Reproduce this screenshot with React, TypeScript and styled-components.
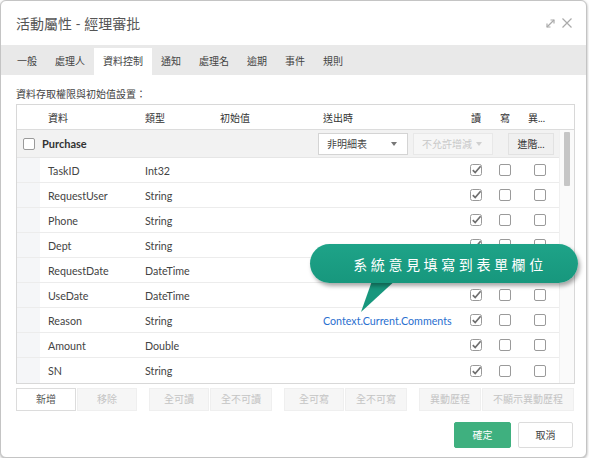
import * as React from "react";
import styled, { createGlobalStyle } from "styled-components";

const GlobalStyle = createGlobalStyle`
  html, body {
    margin: 0;
    padding: 0;
    background: #ffffff;
  }
  body {
    font-family: Lato, "Noto Sans CJK TC", sans-serif;
    font-size: 11px;
    color: #444;
  }
`;

const CJK = `Lato, "Noto Sans CJK TC", sans-serif`;

const Dialog = styled.div`
  position: relative;
  box-sizing: border-box;
  width: 587px;
  height: 458px;
  border: 1px solid #c4c4c4;
  border-radius: 6px;
  box-shadow: 0 1px 3px rgba(0, 0, 0, 0.35);
  background: #fff;
  overflow: hidden;
  display: flex;
  flex-direction: column;
`;

const TitleBar = styled.div`
  height: 44px;
  display: flex;
  align-items: center;
  justify-content: space-between;
  padding: 0 13px 0 15px;
`;

const Title = styled.div`
  font-family: ${CJK};
  font-size: 14px;
  color: #555;
`;

const TitleIcons = styled.div`
  display: flex;
  align-items: center;
  gap: 5px;
  color: #aaa;
`;

const TabBar = styled.div`
  height: 30px;
  background: #e9e9e9;
  display: flex;
  align-items: flex-end;
  padding-left: 7px;
`;

const Tab = styled.div<{ $active?: boolean }>`
  height: 27px;
  line-height: 27px;
  padding: 0 9px;
  font-family: ${CJK};
  font-size: 10px;
  color: #444;
  background: ${(p) => (p.$active ? "#fff" : "transparent")};
`;

const Content = styled.div`
  padding: 0 12px 0 15px;
  display: flex;
  flex-direction: column;
`;

const Caption = styled.div`
  font-family: ${CJK};
  font-size: 10px;
  color: #444;
  height: 29px;
  line-height: 14px;
  padding-top: 12px;
  box-sizing: border-box;
`;

const COLS = "23px 97px 75px 103px 147px 28px 30px 39px";

const Table = styled.div`
  box-sizing: border-box;
  width: 559px;
  height: 280px;
  border: 1px solid #d8d8d8;
  display: flex;
  flex-direction: column;
`;

const HeaderRow = styled.div`
  display: grid;
  grid-template-columns: ${COLS};
  height: 24px;
  align-items: center;
  border-bottom: 1px solid #dcdcdc;
  font-family: ${CJK};
  font-size: 10px;
  color: #333;
`;

const HeadCell = styled.div<{ $align?: string }>`
  padding-left: ${(p) => (p.$align === "center" ? "0" : "8px")};
  text-align: ${(p) => p.$align || "left"};
  white-space: nowrap;
`;

const Body = styled.div`
  flex: 1;
  display: flex;
`;

const Rows = styled.div`
  width: 542px;
  display: flex;
  flex-direction: column;
`;

const GroupRow = styled.div`
  display: grid;
  grid-template-columns: 23px 1fr 247px;
  height: 28px;
  align-items: center;
  background: #f2f2f2;
  border-bottom: 1px solid #e6e6e6;
  box-sizing: border-box;
`;

const GroupName = styled.div`
  font-weight: 700;
  font-size: 11px;
  color: #333;
  padding-left: 2px;
`;

const GroupControls = styled.div`
  display: flex;
  align-items: center;
  padding-left: 6px;
`;

const Select = styled.div<{ $disabled?: boolean; $w: number }>`
  box-sizing: border-box;
  width: ${(p) => p.$w}px;
  height: 22px;
  display: flex;
  align-items: center;
  justify-content: space-between;
  padding: 0 10px 0 8px;
  margin-right: 5px;
  white-space: nowrap;
  font-family: ${CJK};
  font-size: 10px;
  background: ${(p) => (p.$disabled ? "#f6f6f6" : "#fff")};
  color: ${(p) => (p.$disabled ? "#c8c8c8" : "#444")};
  border: 1px solid ${(p) => (p.$disabled ? "#e8e8e8" : "#d4d4d4")};
`;

const Caret = styled.span<{ $disabled?: boolean }>`
  width: 0;
  height: 0;
  border-left: 3.5px solid transparent;
  border-right: 3.5px solid transparent;
  border-top: 4px solid ${(p) => (p.$disabled ? "#d0d0d0" : "#777")};
`;

const SmallButton = styled.div`
  box-sizing: border-box;
  margin-left: 10px;
  width: 46px;
  height: 22px;
  line-height: 20px;
  text-align: center;
  font-family: ${CJK};
  font-size: 10px;
  color: #333;
  background: #f0f0f0;
  border: 1px solid #e2e2e2;
`;

const DataRow = styled.div`
  display: grid;
  grid-template-columns: ${COLS};
  height: 25px;
  align-items: center;
  border-bottom: 1px solid #ececec;
  box-sizing: border-box;
  font-size: 10.7px;
  color: #444;
  &:last-child {
    border-bottom: none;
  }
`;

const Indent = styled.div`
  align-self: stretch;
  background: #f5f6f8;
`;

const Cell = styled.div<{ $link?: boolean }>`
  padding-left: 8px;
  white-space: nowrap;
  color: ${(p) => (p.$link ? "#2a6fcf" : "inherit")};
`;

const CheckCell = styled.div`
  display: flex;
  justify-content: center;
  align-items: center;
`;

const Box = styled.span`
  display: inline-block;
  box-sizing: border-box;
  width: 12px;
  height: 12px;
  border: 1px solid #9a9a9a;
  border-radius: 2px;
  background: #fff;
`;

const ScrollTrack = styled.div`
  width: 15px;
  background: #fafafa;
  border-left: 1px solid #f0f0f0;
  box-sizing: border-box;
  display: flex;
  justify-content: center;
  padding-top: 2px;
`;

const ScrollThumb = styled.div`
  width: 6px;
  height: 54px;
  background: #c6c6c6;
  border-radius: 1px;
`;

const ButtonBar = styled.div`
  display: flex;
  gap: 12px;
  margin-top: 4px;
`;

const ButtonGroup = styled.div`
  display: flex;
  gap: 1px;
`;

const ToolButton = styled.div<{ $enabled?: boolean }>`
  box-sizing: border-box;
  min-width: 60px;
  height: 23px;
  line-height: 21px;
  padding: 0 10px;
  white-space: nowrap;
  text-align: center;
  font-family: ${CJK};
  font-size: 10px;
  color: ${(p) => (p.$enabled ? "#555" : "#c4c4c4")};
  background: ${(p) => (p.$enabled ? "#fff" : "#f6f6f6")};
  border: 1px solid ${(p) => (p.$enabled ? "#dcdcdc" : "#efefef")};
`;

const Footer = styled.div`
  display: flex;
  justify-content: flex-end;
  gap: 7px;
  padding: 11px 13px 0 0;
`;

const FooterButton = styled.div<{ $primary?: boolean }>`
  box-sizing: border-box;
  width: ${(p) => (p.$primary ? "57px" : "55px")};
  height: 26px;
  line-height: 24px;
  text-align: center;
  font-family: ${CJK};
  font-size: 10px;
  color: ${(p) => (p.$primary ? "#fff" : "#444")};
  background: ${(p) => (p.$primary ? "#3fb07f" : "#fff")};
  border: 1px solid ${(p) => (p.$primary ? "#3fb07f" : "#dcdcdc")};
  border-radius: 2px;
`;

const Callout = styled.div`
  position: absolute;
  left: 309px;
  top: 243px;
  width: 268px;
  height: 39px;
`;

const Bubble = styled.div`
  position: relative;
  z-index: 1;
  height: 100%;
  border-radius: 20px;
  background: linear-gradient(#1ea388, #17977d);
  box-shadow: 2px 3px 4px rgba(0, 0, 0, 0.35);
  display: flex;
  align-items: center;
  justify-content: center;
  padding-left: 12px;
  font-family: "Noto Sans CJK TC", sans-serif;
  font-size: 14px;
  letter-spacing: 3.6px;
  color: #fff;
`;

const Tail = styled.svg`
  position: absolute;
  left: 46px;
  top: 34px;
  z-index: 0;
  overflow: visible;
`;

const CheckedBox = () => (
  <svg width="14" height="14" viewBox="0 0 14 14">
    <rect x="1.5" y="1.5" width="11" height="11" rx="2" fill="#fff" stroke="#9a9a9a" />
    <path d="M3.8 7.2 L6.2 9.6 L11.6 3.2" fill="none" stroke="#6f6f6f" strokeWidth="1.7" />
  </svg>
);

const rows: Array<[string, string, string?]> = [
  ["TaskID", "Int32"],
  ["RequestUser", "String"],
  ["Phone", "String"],
  ["Dept", "String"],
  ["RequestDate", "DateTime"],
  ["UseDate", "DateTime"],
  ["Reason", "String", "Context.Current.Comments"],
  ["Amount", "Double"],
  ["SN", "String"],
];

const tabs = ["一般", "處理人", "資料控制", "通知", "處理名", "逾期", "事件", "規則"];

export default function App() {
  return (
    <>
      <GlobalStyle />
      <Dialog>
        <TitleBar>
          <Title>活動屬性 - 經理審批</Title>
          <TitleIcons>
            <svg width="11" height="11" viewBox="0 0 11 11" fill="none" stroke="#aaa" strokeWidth="1.2">
              <path d="M2 9 L9 2" />
              <path d="M5.5 2 H9 V5.5" />
              <path d="M2 5.5 V9 H5.5" />
            </svg>
            <svg width="12" height="12" viewBox="0 0 12 12" fill="none" stroke="#aaa" strokeWidth="1.2">
              <path d="M1.5 1.5 L10.5 10.5 M10.5 1.5 L1.5 10.5" />
            </svg>
          </TitleIcons>
        </TitleBar>

        <TabBar>
          {tabs.map((t) => (
            <Tab key={t} $active={t === "資料控制"}>
              {t}
            </Tab>
          ))}
        </TabBar>

        <Content>
          <Caption>資料存取權限與初始值設置：</Caption>
          <Table>
            <HeaderRow>
              <span />
              <HeadCell>資料</HeadCell>
              <HeadCell>類型</HeadCell>
              <HeadCell>初始值</HeadCell>
              <HeadCell>送出時</HeadCell>
              <HeadCell $align="center">讀</HeadCell>
              <HeadCell $align="center">寫</HeadCell>
              <HeadCell>異...</HeadCell>
            </HeaderRow>
            <Body>
              <Rows>
                <GroupRow>
                  <CheckCell>
                    <Box />
                  </CheckCell>
                  <GroupName>Purchase</GroupName>
                  <GroupControls>
                    <Select $w={90}>
                      非明細表
                      <Caret />
                    </Select>
                    <Select $w={80} $disabled>
                      不允許增減
                      <Caret $disabled />
                    </Select>
                    <SmallButton>進階...</SmallButton>
                  </GroupControls>
                </GroupRow>
                {rows.map(([name, type, submit]) => (
                  <DataRow key={name}>
                    <Indent />
                    <Cell>{name}</Cell>
                    <Cell>{type}</Cell>
                    <Cell />
                    <Cell $link>{submit}</Cell>
                    <CheckCell>
                      <CheckedBox />
                    </CheckCell>
                    <CheckCell>
                      <Box />
                    </CheckCell>
                    <CheckCell>
                      <Box />
                    </CheckCell>
                  </DataRow>
                ))}
              </Rows>
              <ScrollTrack>
                <ScrollThumb />
              </ScrollTrack>
            </Body>
          </Table>

          <ButtonBar>
            <ButtonGroup>
              <ToolButton $enabled>新增</ToolButton>
              <ToolButton>移除</ToolButton>
            </ButtonGroup>
            <ButtonGroup>
              <ToolButton>全可讀</ToolButton>
              <ToolButton>全不可讀</ToolButton>
            </ButtonGroup>
            <ButtonGroup>
              <ToolButton>全可寫</ToolButton>
              <ToolButton>全不可寫</ToolButton>
            </ButtonGroup>
            <ButtonGroup>
              <ToolButton>異動歷程</ToolButton>
              <ToolButton>不顯示異動歷程</ToolButton>
            </ButtonGroup>
          </ButtonBar>
        </Content>

        <Footer>
          <FooterButton $primary>確定</FooterButton>
          <FooterButton>取消</FooterButton>
        </Footer>

        <Callout>
          <Bubble>系統意見填寫到表單欄位</Bubble>
          <Tail width="45" height="36">
            <polygon points="17,0 42,0 5,34" fill="#17977d" />
          </Tail>
        </Callout>
      </Dialog>
    </>
  );
}
